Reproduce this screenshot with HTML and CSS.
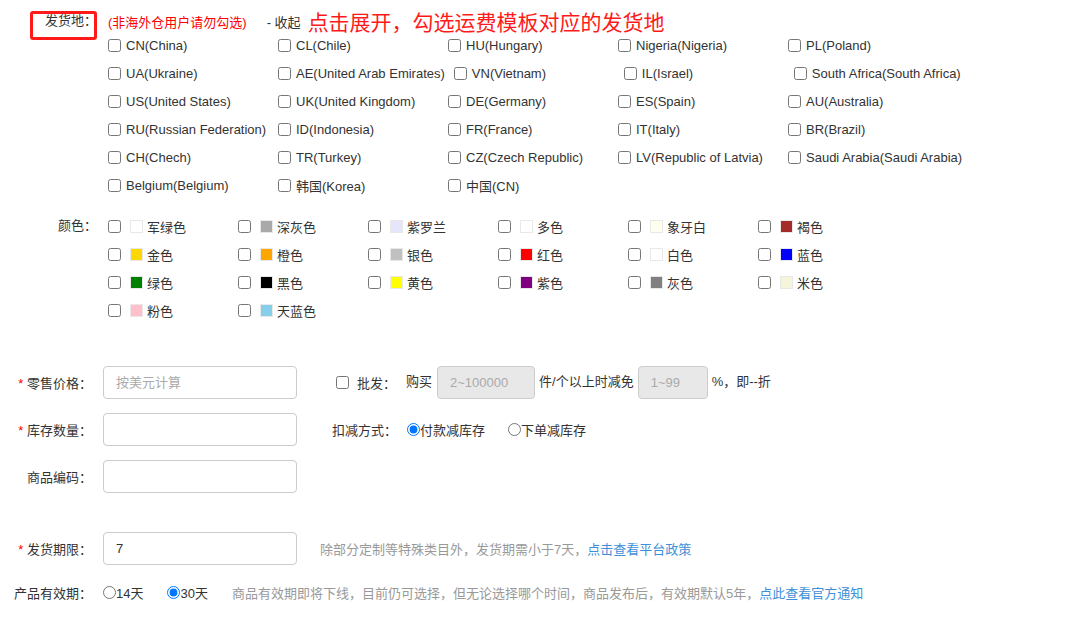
FILE: index.html
```html
<!DOCTYPE html>
<html lang="zh-CN">
<head>
    <meta charset="UTF-8">
    <meta name="viewport" content="width=device-width, initial-scale=1.0">
    <title>商品信息</title>
    <link rel="stylesheet" href="styles.css">
</head>
<body>
    <div class="page">
        <div class="field field-ship">
            <div class="field-label"><span class="marked">发货地：</span></div>
            <div class="field-body">
                <div class="ship-head">
                    <span class="warn">(非海外仓用户请勿勾选)</span>
                    <a href="#" class="toggle">- 收起</a>
                    <span class="note">点击展开，勾选运费模板对应的发货地</span>
                </div>
                <div class="country-list">
                    <label class="country"><input type="checkbox">CN(China)</label>
                    <label class="country"><input type="checkbox">CL(Chile)</label>
                    <label class="country"><input type="checkbox">HU(Hungary)</label>
                    <label class="country"><input type="checkbox">Nigeria(Nigeria)</label>
                    <label class="country"><input type="checkbox">PL(Poland)</label>
                    <label class="country"><input type="checkbox">UA(Ukraine)</label>
                    <label class="country"><input type="checkbox">AE(United Arab Emirates)</label>
                    <label class="country"><input type="checkbox">VN(Vietnam)</label>
                    <label class="country"><input type="checkbox">IL(Israel)</label>
                    <label class="country"><input type="checkbox">South Africa(South Africa)</label>
                    <label class="country"><input type="checkbox">US(United States)</label>
                    <label class="country"><input type="checkbox">UK(United Kingdom)</label>
                    <label class="country"><input type="checkbox">DE(Germany)</label>
                    <label class="country"><input type="checkbox">ES(Spain)</label>
                    <label class="country"><input type="checkbox">AU(Australia)</label>
                    <label class="country"><input type="checkbox">RU(Russian Federation)</label>
                    <label class="country"><input type="checkbox">ID(Indonesia)</label>
                    <label class="country"><input type="checkbox">FR(France)</label>
                    <label class="country"><input type="checkbox">IT(Italy)</label>
                    <label class="country"><input type="checkbox">BR(Brazil)</label>
                    <label class="country"><input type="checkbox">CH(Chech)</label>
                    <label class="country"><input type="checkbox">TR(Turkey)</label>
                    <label class="country"><input type="checkbox">CZ(Czech Republic)</label>
                    <label class="country"><input type="checkbox">LV(Republic of Latvia)</label>
                    <label class="country"><input type="checkbox">Saudi Arabia(Saudi Arabia)</label>
                    <label class="country"><input type="checkbox">Belgium(Belgium)</label>
                    <label class="country"><input type="checkbox">韩国(Korea)</label>
                    <label class="country"><input type="checkbox">中国(CN)</label>
                </div>
            </div>
        </div>

        <div class="field field-color">
            <div class="field-label">颜色：</div>
            <div class="field-body">
                <div class="color-list">
                    <label class="color-item"><input type="checkbox"><span class="swatch" style="background:#fff"></span>军绿色</label>
                    <label class="color-item"><input type="checkbox"><span class="swatch" style="background:#a9a9a9"></span>深灰色</label>
                    <label class="color-item"><input type="checkbox"><span class="swatch" style="background:#e6e6fa"></span>紫罗兰</label>
                    <label class="color-item"><input type="checkbox"><span class="swatch" style="background:#fff"></span>多色</label>
                    <label class="color-item"><input type="checkbox"><span class="swatch" style="background:#fffff0"></span>象牙白</label>
                    <label class="color-item"><input type="checkbox"><span class="swatch" style="background:#a52a2a"></span>褐色</label>
                    <label class="color-item"><input type="checkbox"><span class="swatch" style="background:#ffd700"></span>金色</label>
                    <label class="color-item"><input type="checkbox"><span class="swatch" style="background:#ffa500"></span>橙色</label>
                    <label class="color-item"><input type="checkbox"><span class="swatch" style="background:#c0c0c0"></span>银色</label>
                    <label class="color-item"><input type="checkbox"><span class="swatch" style="background:#ff0000"></span>红色</label>
                    <label class="color-item"><input type="checkbox"><span class="swatch" style="background:#fff"></span>白色</label>
                    <label class="color-item"><input type="checkbox"><span class="swatch" style="background:#0000ff"></span>蓝色</label>
                    <label class="color-item"><input type="checkbox"><span class="swatch" style="background:#008000"></span>绿色</label>
                    <label class="color-item"><input type="checkbox"><span class="swatch" style="background:#000"></span>黑色</label>
                    <label class="color-item"><input type="checkbox"><span class="swatch" style="background:#ffff00"></span>黄色</label>
                    <label class="color-item"><input type="checkbox"><span class="swatch" style="background:#800080"></span>紫色</label>
                    <label class="color-item"><input type="checkbox"><span class="swatch" style="background:#808080"></span>灰色</label>
                    <label class="color-item"><input type="checkbox"><span class="swatch" style="background:#f5f5dc"></span>米色</label>
                    <label class="color-item"><input type="checkbox"><span class="swatch" style="background:#ffc0cb"></span>粉色</label>
                    <label class="color-item"><input type="checkbox"><span class="swatch" style="background:#87ceeb"></span>天蓝色</label>
                </div>
            </div>
        </div>

        <div class="form">
            <div class="form-row">
                <div class="form-label"><span class="req">*</span> 零售价格：</div>
                <input type="text" class="text-input" placeholder="按美元计算">
                <div class="wholesale">
                    <input type="checkbox" id="wholesale">
                    <label for="wholesale">批发：</label>
                    <span class="buy">购买</span>
                    <input type="text" class="text-input input-num" placeholder="2~100000" disabled>
                    <span class="unit">件/个以上时减免</span>
                    <input type="text" class="text-input input-pct" placeholder="1~99" disabled>
                    <span class="unit">%，即--折</span>
                </div>
            </div>
            <div class="form-row">
                <div class="form-label"><span class="req">*</span> 库存数量：</div>
                <input type="text" class="text-input">
                <div class="deduct">
                    <span class="deduct-label">扣减方式：</span>
                    <label class="radio"><input type="radio" name="deduct" checked>付款减库存</label>
                    <label class="radio"><input type="radio" name="deduct">下单减库存</label>
                </div>
            </div>
            <div class="form-row">
                <div class="form-label">商品编码：</div>
                <input type="text" class="text-input">
            </div>
            <div class="form-row row-ship-time">
                <div class="form-label"><span class="req">*</span> 发货期限：</div>
                <input type="text" class="text-input" value="7">
                <span class="hint">除部分定制等特殊类目外，发货期需小于7天，<a href="#">点击查看平台政策</a></span>
            </div>
            <div class="form-row row-valid">
                <div class="form-label">产品有效期：</div>
                <label class="radio"><input type="radio" name="valid">14天</label>
                <label class="radio"><input type="radio" name="valid" checked>30天</label>
                <span class="hint">商品有效期即将下线，目前仍可选择，但无论选择哪个时间，商品发布后，有效期默认5年，<a href="#">点此查看官方通知</a></span>
            </div>
        </div>
    </div>
</body>
</html>
```

FILE: styles.css
```css
body {
    margin: 0;
    font-family: "Liberation Sans", "Noto Sans CJK SC", sans-serif;
    font-size: 13px;
    color: #333;
    background: #fff;
}

a {
    text-decoration: none;
}

input[type="checkbox"],
input[type="radio"] {
    width: 13px;
    height: 13px;
    margin: 0;
    flex-shrink: 0;
}

.page {
    padding-top: 10px;
}

.field {
    display: flex;
}

.field-label {
    width: 97px;
    flex-shrink: 0;
    text-align: right;
}

.field-body {
    margin-left: 11px;
}

/* 发货地 */
.field-ship .field-label {
    height: 22px;
    line-height: 22px;
}

.marked {
    position: relative;
}

.marked::after {
    content: "";
    position: absolute;
    left: -15px;
    top: -2px;
    width: 67px;
    height: 29px;
    box-sizing: border-box;
    border: 3px solid #ff1a1a;
    border-radius: 3px;
}

.ship-head {
    display: flex;
    align-items: center;
    height: 22px;
}

.warn {
    color: #f00;
}

.toggle {
    color: #333;
    margin-left: 20px;
}

.note {
    color: #ff1a1a;
    font-size: 21px;
    margin-left: 7px;
}

.country-list {
    width: 900px;
    display: flex;
    flex-wrap: wrap;
    margin-top: -1px;
}

.country {
    display: flex;
    align-items: center;
    height: 28px;
    min-width: 170px;
    padding-right: 9px;
    box-sizing: border-box;
}

.country input {
    margin-right: 5px;
}

/* 颜色 */
.field-color {
    margin-top: 14px;
}

.field-color .field-label {
    height: 28px;
    line-height: 26px;
}

.color-list {
    width: 780px;
    display: flex;
    flex-wrap: wrap;
    margin-top: -1px;
}

.color-item {
    display: flex;
    align-items: center;
    width: 130px;
    height: 28px;
}

.color-item input {
    margin-right: 9px;
}

.swatch {
    width: 13px;
    height: 13px;
    box-sizing: border-box;
    border: 1px solid #e8e8e8;
    margin-right: 4px;
}

.color-name {
    margin-bottom: 2px;
}

/* 表单 */
.form {
    margin-top: 42px;
}

.form-row {
    display: flex;
    align-items: center;
    height: 33px;
    margin-bottom: 14px;
}

.form-label {
    width: 92px;
    flex-shrink: 0;
    text-align: right;
    margin-right: 11px;
}

.req {
    color: #f00;
}

.text-input {
    width: 194px;
    height: 33px;
    box-sizing: border-box;
    border: 1px solid #ccc;
    border-radius: 4px;
    padding: 0 12px;
    font-family: inherit;
    font-size: 13px;
    color: #333;
    background: #fff;
    outline: none;
}

.text-input::placeholder {
    color: #aaa;
}

.wholesale {
    display: flex;
    align-items: center;
    margin-left: 39px;
}

.wholesale input[type="checkbox"] {
    margin-right: 8px;
}

.buy {
    margin-left: 10px;
    margin-right: 5px;
    margin-bottom: 4px;
}

.unit {
    margin: 0 4px 4px;
}

.input-num {
    width: 98px;
    background: #e8e8e8;
}

.input-pct {
    width: 70px;
    background: #e8e8e8;
}

.deduct {
    display: flex;
    align-items: center;
    margin-left: 35px;
}

.deduct-label {
    margin-right: 10px;
}

.radio {
    display: flex;
    align-items: center;
}

.deduct .radio + .radio {
    margin-left: 23px;
}

.row-ship-time {
    margin-top: 39px;
}

.hint {
    color: #999;
    margin-left: 23px;
}

.hint a {
    color: #3d8fd8;
}

.row-valid {
    height: 22px;
    margin-top: 16px;
}

.row-valid .radio + .radio,
.row-valid .hint {
    margin-left: 24px;
}
```
